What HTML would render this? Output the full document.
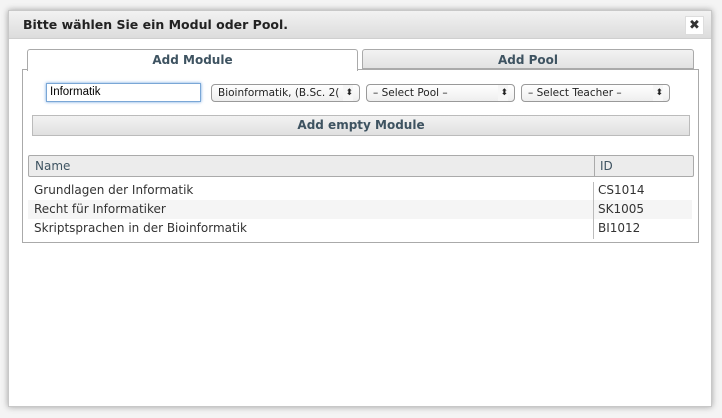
<!DOCTYPE html>
<html><head><meta charset="utf-8"><style>
*{box-sizing:border-box;margin:0;padding:0}
body{width:722px;height:418px;overflow:hidden;background:#ececec;font-family:"DejaVu Sans","Liberation Sans",sans-serif;position:relative}
.bgp{position:absolute;left:0;top:0;width:722px;height:418px;background:#f4f4f4}
.dlg{position:absolute;left:8px;top:10px;width:704px;height:397px;background:#fff;border:1px solid #c8c8c8;box-shadow:0 0 6px rgba(0,0,0,.35)}
.tb{position:absolute;left:0;top:0;width:702px;height:28px;background:linear-gradient(#f2f2f2,#dcdcdc);border-bottom:1px solid #cfcfcf}
.tb span{position:absolute;left:14px;top:6px;font-size:12.5px;font-weight:bold;color:#222}
.x{position:absolute;left:676px;top:5px;width:19px;height:19px;background:#fff;border:1px solid #ddd;font-size:13px;font-weight:bold;text-align:center;line-height:17px;color:#333}
.panel{position:absolute;left:13px;top:58px;width:677px;height:174px;border:1px solid #aaa;border-top:1px solid #aaa}
.tab{position:absolute;top:38px;height:22px;font-size:12px;font-weight:bold;color:#3e5361;text-align:center;line-height:21px;border:1px solid #aaa;border-bottom:none;border-radius:3px 3px 0 0}
.t1{left:18px;width:331px;background:#fff;height:22px;z-index:2}
.t2{left:353px;width:332px;background:linear-gradient(#f2f2f2,#e2e2e2);height:20px;border-bottom:1px solid #aaa}
.inp{position:absolute;left:37px;top:72px;width:155px;height:19px;border:1px solid #7aa7d6;box-shadow:0 0 3px #6fa3e0;font-size:11.5px;line-height:17px;padding-left:3px;font-family:"Liberation Sans",sans-serif;color:#000}
.sel{position:absolute;top:73px;width:149px;height:18px;border:1px solid #999;border-radius:4px;background:linear-gradient(#fff,#eee);font-size:10.5px;line-height:16px;padding-left:6px;color:#222;overflow:hidden;white-space:nowrap}
.sel b{position:absolute;right:6px;top:0;font-weight:normal;font-size:9px;background:#f6f6f6;padding-left:2px}
.btn{position:absolute;left:23px;top:104px;width:658px;height:21px;border:1px solid #bbb;background:linear-gradient(#f2f2f2,#e0e0e0);font-size:12px;font-weight:bold;color:#3e5361;text-align:center;line-height:19px}
.hdr{position:absolute;left:19px;top:144px;width:666px;height:22px;border:1px solid #aaa;border-radius:2px;background:#ececec;font-size:12px;color:#3e5361}
.hdr span{position:absolute;top:3px}
.row{position:absolute;left:19px;width:664px;height:19px;font-size:12px;color:#333;line-height:19px}
.row span{position:absolute}
.vl{position:absolute;left:584px;top:171px;width:1px;height:57px;background:#bbb}
</style></head><body>
<div class="bgp"></div>
<div class="dlg">
<div class="tb"><span>Bitte wählen Sie ein Modul oder Pool.</span><div class="x">✖</div></div>
<div class="panel"></div>
<div class="tab t1">Add Module</div>
<div class="tab t2">Add Pool</div>
<div class="inp">Informatik</div>
<div class="sel" style="left:202px">Bioinformatik, (B.Sc. 2(<b>⬍</b></div>
<div class="sel" style="left:357px">– Select Pool –<b>⬍</b></div>
<div class="sel" style="left:512px">– Select Teacher –<b>⬍</b></div>
<div class="btn">Add empty Module</div>
<div class="hdr"><span style="left:6px">Name</span><span style="left:565px;border-left:1px solid #aaa;height:20px;top:0;padding:3px 0 0 5px">ID</span></div>
<div class="row" style="top:170px"><span style="left:6px">Grundlagen der Informatik</span><span style="left:570px">CS1014</span></div>
<div class="row" style="top:189px;background:#f5f5f5"><span style="left:6px">Recht für Informatiker</span><span style="left:570px">SK1005</span></div>
<div class="row" style="top:208px"><span style="left:6px">Skriptsprachen in der Bioinformatik</span><span style="left:570px">BI1012</span></div>
<div class="vl"></div>
</div>
</body></html>
